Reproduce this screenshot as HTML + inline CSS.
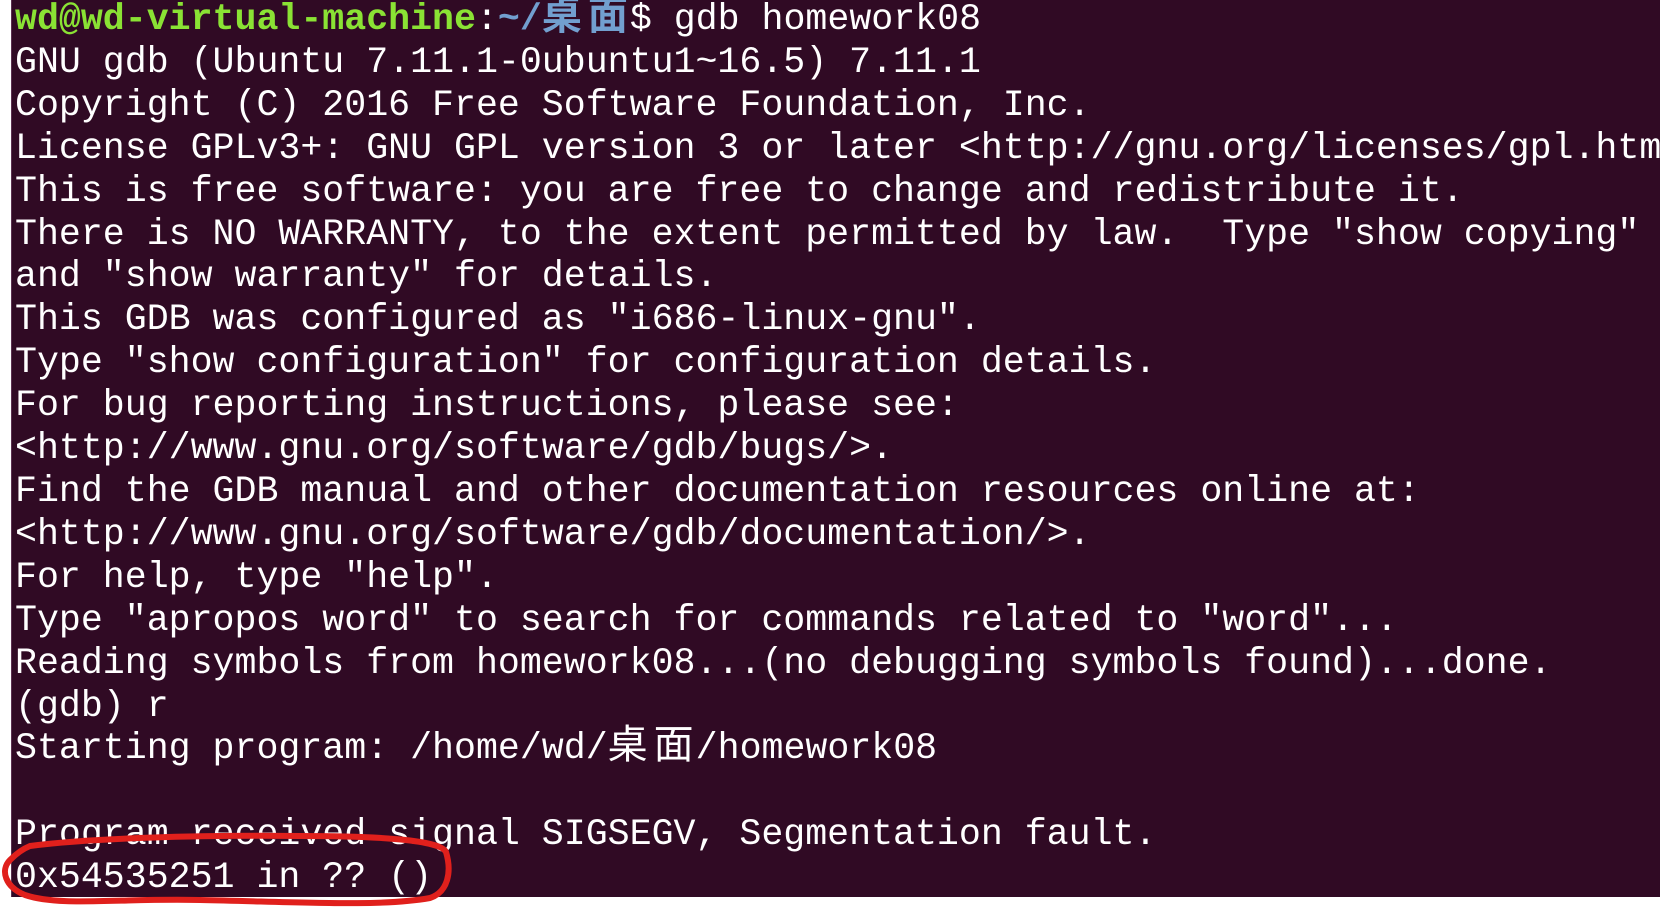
<!DOCTYPE html>
<html><head><meta charset="utf-8"><style>
html,body{margin:0;padding:0;width:1660px;height:912px;background:#fff;overflow:hidden;position:relative}
.term{position:absolute;left:11px;top:0;width:1649px;height:897px;background:#300a24;border-left:1px solid #5a3050}
pre{position:absolute;left:15px;top:-1px;margin:0;font-family:"Liberation Mono","Noto Sans CJK SC",monospace;font-size:36.6px;line-height:42.9px;color:#fff;white-space:pre}
.g{color:#8ae234;font-weight:bold}.b{color:#729fcf;font-weight:bold}
.c{display:inline-block;width:88px;letter-spacing:6px;font-size:40px;line-height:30px}
svg{position:absolute;left:0;top:0}
</style></head><body>
<div class="term"></div>
<pre><span class="g">wd@wd-virtual-machine</span>:<span class="b">~/<span class="c">桌面</span></span>$ gdb homework08
GNU gdb (Ubuntu 7.11.1-0ubuntu1~16.5) 7.11.1
Copyright (C) 2016 Free Software Foundation, Inc.
License GPLv3+: GNU GPL version 3 or later &lt;http://gnu.org/licenses/gpl.html&gt;
This is free software: you are free to change and redistribute it.
There is NO WARRANTY, to the extent permitted by law.  Type "show copying"
and "show warranty" for details.
This GDB was configured as "i686-linux-gnu".
Type "show configuration" for configuration details.
For bug reporting instructions, please see:
&lt;http://www.gnu.org/software/gdb/bugs/&gt;.
Find the GDB manual and other documentation resources online at:
&lt;http://www.gnu.org/software/gdb/documentation/&gt;.
For help, type "help".
Type "apropos word" to search for commands related to "word"...
Reading symbols from homework08...(no debugging symbols found)...done.
(gdb) r
Starting program: /home/wd/<span class="c">桌面</span>/homework08

Program received signal SIGSEGV, Segmentation fault.
0x54535251 in ?? ()</pre>
<svg width="1660" height="912"><path d="M30,846 C90,838 200,835 300,836 C380,836 440,840 446,852 C452,872 448,892 430,898 C380,907 300,902 200,900 C120,898 60,907 25,895 C5,887 0,870 10,860 C18,852 25,848 30,846" fill="none" stroke="#e0201c" stroke-width="6" stroke-linecap="round"/></svg>
</body></html>
